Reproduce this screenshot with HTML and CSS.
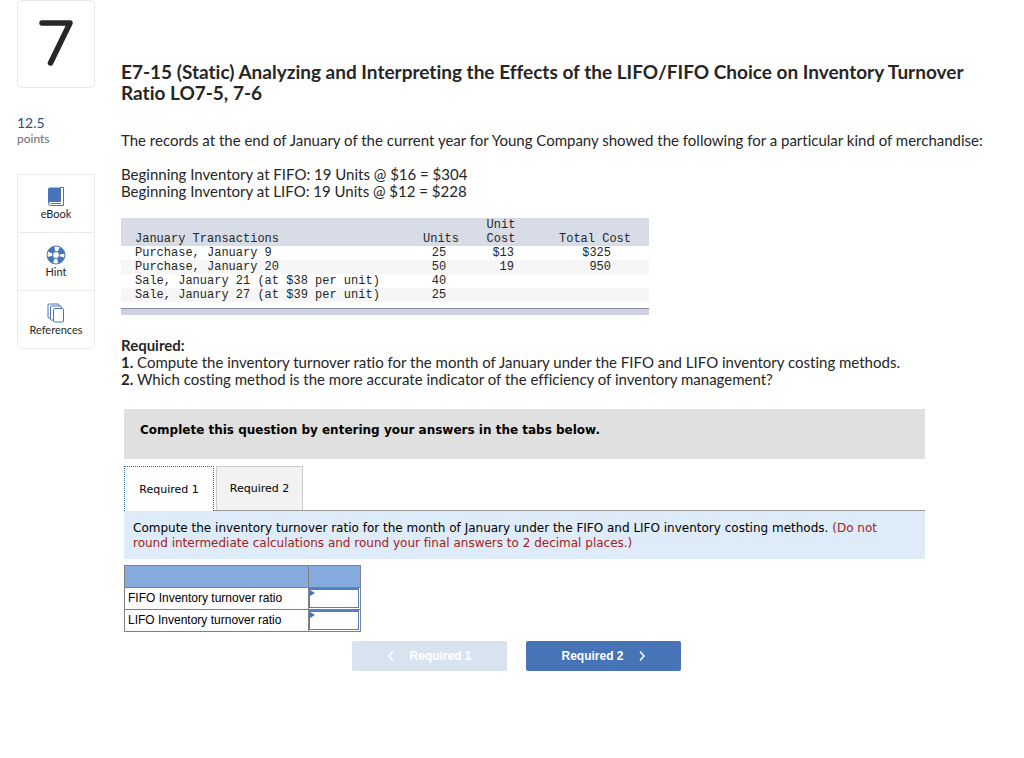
FILE: index.html
```html
<!DOCTYPE html>
<html lang="en">
<head>
  <meta charset="utf-8">
  <meta name="viewport" content="width=device-width,initial-scale=1.0">
  <title>E7-15 (Static) Inventory Turnover Ratio</title>
  <link rel="stylesheet" href="styles.css">
</head>
<body>
  <div class="page">
    <!-- Question number, points and resources -->
    <aside class="sidebar">
      <div class="question-number">
        <svg width="34" height="48" viewBox="0 0 34 48" role="img" aria-label="Question 7">
          <polyline points="3,2 31,2 11.500,42" fill="none" stroke="#262626" stroke-width="5.500" stroke-linecap="round" stroke-linejoin="round"/>
        </svg>
      </div>
      <div class="points">
        <div class="points-value">12.5</div>
        <div class="points-label">points</div>
      </div>
      <nav class="resources">
        <a class="resource" href="#ebook">
          <svg width="20" height="20" viewBox="0 0 20 20">
            <path d="M4 .5H14.500V14.500H4.500Q3 14.500 2 16V2Q2 .5 4 .5Z" fill="#4674b6"/>
            <path d="M2.500 16.500Q3 14.500 4.500 14.500H14.500V.5H17.500V18.500H4.500Q2.500 18.500 2.500 16.500Z" fill="none" stroke="#4674b6"/>
            <path d="M4.500 16.500H15" stroke="#4674b6"/>
          </svg>
          eBook
        </a>
        <a class="resource" href="#hint">
          <svg width="20" height="20" viewBox="0 0 20 20">
            <circle cx="10" cy="10" r="9" fill="#fff" stroke="#4674b6"/>
            <circle cx="10" cy="10" r="6.200" fill="none" stroke="#4674b6" stroke-width="5.500" stroke-dasharray="5.740 4" stroke-dashoffset="-2"/>
            <circle cx="10" cy="10" r="3.500" fill="#fff" stroke="#4674b6"/>
          </svg>
          Hint
        </a>
        <a class="resource" href="#references">
          <svg width="20" height="20" viewBox="0 0 20 20" fill="#fff" stroke="#4674b6">
            <rect x="2" y="1" width="11" height="14" rx="1"/>
            <rect x="4.500" y="3" width="11" height="14" rx="1"/>
            <rect x="7.500" y="5.500" width="10" height="13.500" rx="1"/>
          </svg>
          References
        </a>
      </nav>
    </aside>

    <main class="content">
      <h1 class="title">E7-15 (Static) Analyzing and Interpreting the Effects of the LIFO/FIFO Choice on Inventory Turnover Ratio LO7-5, 7-6</h1>

      <p class="text">The records at the end of January of the current year for Young Company showed the following for a particular kind of merchandise:</p>
      <p class="text">Beginning Inventory at FIFO: 19 Units @ $16 = $304<br>Beginning Inventory at LIFO: 19 Units @ $12 = $228</p>

      <table class="transactions">
        <thead>
          <tr>
            <th class="col-name" scope="col">January Transactions</th>
            <th class="col-units" scope="col">Units</th>
            <th class="col-cost" scope="col">Unit<br>Cost</th>
            <th class="col-total" scope="col">Total Cost</th>
          </tr>
        </thead>
        <tbody>
          <tr><td>Purchase, January 9</td><td class="units">25</td><td class="cost">$13</td><td class="total">$325</td></tr>
          <tr><td>Purchase, January 20</td><td class="units">50</td><td class="cost">19</td><td class="total">950</td></tr>
          <tr><td>Sale, January 21 (at $38 per unit)</td><td class="units">40</td><td></td><td></td></tr>
          <tr><td>Sale, January 27 (at $39 per unit)</td><td class="units">25</td><td></td><td></td></tr>
        </tbody>
      </table>
      <div class="table-end"></div>

      <div class="text">
        <b>Required:</b><br>
        <b>1.</b> Compute the inventory turnover ratio for the month of January under the FIFO and LIFO inventory costing methods.<br>
        <b>2.</b> Which costing method is the more accurate indicator of the efficiency of inventory management?
      </div>

      <!-- Answer area -->
      <section class="answer">
        <div class="answer-header">Complete this question by entering your answers in the tabs below.</div>
        <div class="tabs" role="tablist">
          <button class="tab active" type="button" role="tab" aria-selected="true">Required 1</button>
          <button class="tab" type="button" role="tab" aria-selected="false">Required 2</button>
        </div>
        <div class="instruction">Compute the inventory turnover ratio for the month of January under the FIFO and LIFO inventory costing methods. <span class="note">(Do not round intermediate calculations and round your final answers to 2 decimal places.)</span></div>

        <table class="ratios">
          <thead>
            <tr><th></th><th></th></tr>
          </thead>
          <tbody>
            <tr>
              <td><label for="fifo">FIFO Inventory turnover ratio</label></td>
              <td class="entry"><input id="fifo" type="text"></td>
            </tr>
            <tr>
              <td><label for="lifo">LIFO Inventory turnover ratio</label></td>
              <td class="entry"><input id="lifo" type="text"></td>
            </tr>
          </tbody>
        </table>

        <div class="pager">
          <button class="pager-button" type="button" disabled>
            <svg width="8" height="12" viewBox="0 0 8 12"><path d="M6 1.500L2 6L6 10.500" /></svg>
            Required 1
          </button>
          <button class="pager-button" type="button">
            Required 2
            <svg width="8" height="12" viewBox="0 0 8 12"><path d="M2 1.500L6 6L2 10.500" /></svg>
          </button>
        </div>
      </section>
    </main>
  </div>
</body>
</html>
```
FILE: styles.css
```css
* {
  box-sizing: border-box;
}

body {
  margin: 0;
  background: #fff;
  color: #262626;
  font-family: Lato, sans-serif;
  font-size: 15px;
  font-variant-ligatures: none;
}

.page {
  display: flex;
  gap: 26px;
  padding: 0 16px 0 17px;
}

/* Sidebar */
.sidebar {
  flex: 0 0 78px;
}

.question-number {
  display: flex;
  justify-content: center;
  padding: 20px 0 18px;
  border: 1px solid #ebebeb;
  border-radius: 5px;
}

.question-number svg {
  overflow: visible;
}

.points {
  margin: 26px 0 27px;
}

.points-value {
  color: #2b4f8f;
  font-size: 14px;
  line-height: 17px;
}

.points-label {
  color: #6b6b6b;
  font-size: 12px;
  line-height: 16px;
}

.resources {
  border: 1px solid #ebebeb;
  border-radius: 0 0 5px 5px;
}

.resource {
  display: flex;
  flex-direction: column;
  align-items: center;
  padding: 12px 0 11px;
  color: #262626;
  font-size: 11px;
  line-height: 14px;
  text-decoration: none;
}

.resource + .resource {
  border-top: 1px solid #ebebeb;
}

/* Question text */
.content {
  flex: 1;
  min-width: 0;
  padding-top: 61px;
}

.title {
  margin: 0 0 29px;
  padding-right: 16px;
  font-size: 19px;
  font-weight: bold;
  line-height: 21px;
}

.text {
  margin: 0 0 17px;
  line-height: 17px;
}

.transactions {
  width: 528px;
  margin-top: 18px;
  border-collapse: collapse;
  table-layout: fixed;
  font-family: "Liberation Mono", monospace;
  font-size: 12px;
  line-height: 14px;
}

.transactions th {
  padding: 0;
  background: #d8dce6;
  font-weight: normal;
  vertical-align: bottom;
}

.transactions td {
  padding: 0;
}

.transactions tbody tr:nth-child(even) {
  background: #f6f6f6;
}

.transactions th:first-child,
.transactions td:first-child {
  padding-left: 14px;
  text-align: left;
}

.col-name {
  width: 290px;
}

.col-units {
  width: 60px;
}

.col-cost {
  width: 60px;
}

.transactions .col-total {
  padding-left: 10px;
}

.transactions .units {
  padding-right: 4px;
  text-align: center;
}

.transactions .cost {
  padding-right: 17px;
  text-align: right;
}

.transactions .total {
  padding-right: 38px;
  text-align: right;
}

.table-end {
  width: 528px;
  height: 7px;
  margin: 6px 0 22px;
  border-top: 1px solid #8c8f9c;
  background: #ccd2e0;
}

/* Answer area */
.answer {
  margin: 21px 83px 0 3px;
  color: #000;
  font-family: "DejaVu Sans", Verdana, sans-serif;
  font-size: 12px;
}

.answer-header {
  padding: 13px 16px 21px;
  background: #e0e0e0;
  font-weight: bold;
  line-height: 16px;
}

.tabs {
  display: flex;
  gap: 2px;
  margin-top: 7px;
  border-bottom: 1px solid #999;
}

.tab {
  width: 87px;
  height: 44px;
  padding: 0;
  border: 1px solid #ccc;
  border-bottom: 0;
  background: #f2f2f2;
  color: #000;
  font: 11px "DejaVu Sans", Verdana, sans-serif;
}

.tab.active {
  width: 90px;
  height: 45px;
  margin-bottom: -1px;
  border: 1px dotted #2f62b5;
  border-bottom: 0;
  background: #fff;
}

.instruction {
  padding: 10px 24px 8px 9px;
  background: #deebf8;
  line-height: 15px;
}

.note {
  color: #a62121;
}

.ratios {
  margin-top: 6px;
  border-collapse: collapse;
  font: 12px "Liberation Sans", Arial, sans-serif;
}

.ratios th,
.ratios td {
  height: 22px;
  padding: 0 3px 2px;
  border: 1px solid #808080;
}

.ratios th {
  background: #85aade;
}

.ratios th:first-child {
  width: 184px;
}

.ratios th:last-child {
  width: 52px;
}

.ratios .entry {
  position: relative;
  padding: 0 1px 1px 0;
}

.entry input {
  display: block;
  width: 100%;
  height: 20px;
  border: 1px solid #4f7ec4;
  border-top-width: 2px;
  background: #fff;
  font: inherit;
}

/* Corner marker of a cell that takes an answer */
.entry::before {
  content: '';
  position: absolute;
  top: 2px;
  left: 1px;
  border: 3px solid transparent;
  border-left: 5px solid #4674b6;
  border-right: 0;
}

.pager {
  display: flex;
  justify-content: center;
  gap: 19px;
  margin-top: 9px;
  padding-right: 16px;
}

.pager-button {
  display: flex;
  justify-content: center;
  align-items: center;
  gap: 14px;
  width: 155px;
  height: 30px;
  padding: 0;
  border: 0;
  border-radius: 2px;
  background: #4674b6;
  color: #fff;
  font: bold 12px "Liberation Sans", Arial, sans-serif;
}

.pager-button:disabled {
  background: #d9e3f0;
}

.pager-button path {
  fill: none;
  stroke: #fff;
  stroke-width: 1.5;
}
```
